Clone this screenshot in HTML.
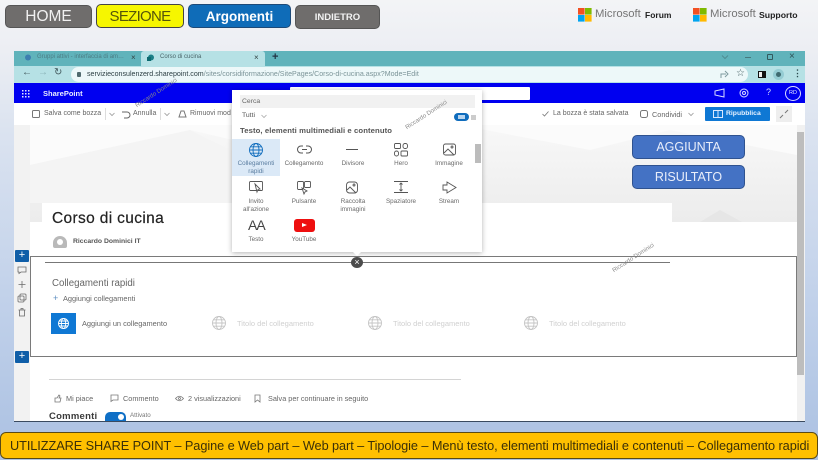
<!DOCTYPE html>
<html lang="it"><head><meta charset="utf-8"><title>Corso di cucina</title>
<style>
*{box-sizing:border-box}
html,body{margin:0;padding:0}
body{width:818px;height:460px;overflow:hidden;position:relative;font-family:"Liberation Sans",sans-serif;background:#e9ecf2}
#w{position:absolute;left:0;top:0;width:818px;height:460px;overflow:hidden;filter:blur(.35px);background:linear-gradient(180deg,#f3f4f6 0,#eceef3 50px,#dbe3f0 130px,#c1d1ea 300px,#aec3e3 440px)}
.a{position:absolute;white-space:nowrap}
.btn{position:absolute;border-radius:5px;display:flex;align-items:center;justify-content:center;border:1px solid #3d3d3d}
.t{color:#666;font-size:7.3px}
.n{color:#d0d0d0;font-size:7.5px}
.lbl{position:absolute;width:48px;text-align:center;font-size:6.3px;line-height:7.5px;color:#6a6a6a}
.wm{font-size:6px;color:#888;transform:rotate(-33deg);transform-origin:0 100%;z-index:5}
svg{position:absolute;overflow:visible}
</style></head><body><div id="w">

<div class="btn" style="left:5px;top:5px;width:87px;height:23px;background:#6f6d6c;color:#f1f1f1;font-size:15.5px;border-color:#555">HOME</div>
<div class="btn" style="left:96px;top:4px;width:88px;height:24px;background:#f6f600;color:#55550a;font-size:15px;letter-spacing:-.7px;border-color:#444">SEZIONE</div>
<div class="btn" style="left:188px;top:4px;width:103px;height:24px;background:#0f6cb8;color:#fff;font-size:13.5px;font-weight:bold;border-color:#1d4a78">Argomenti</div>
<div class="btn" style="left:295px;top:5px;width:85px;height:24px;background:#6f6d6c;color:#f3f3f3;font-size:9.5px;font-weight:bold;border-color:#555">INDIETRO</div>

<!-- Microsoft logos -->
<svg style="left:578px;top:8px" width="14" height="14"><rect width="6.6" height="6.6" fill="#f25022"/><rect x="7" width="6.6" height="6.6" fill="#7fba00"/><rect y="7" width="6.600" height="6.600" fill="#00a4ef"/><rect x="7" y="7" width="6.600" height="6.600" fill="#ffb900"/></svg>
<div class="a" style="left:595px;top:8px;font-size:11.3px;color:#757575">Microsoft</div>
<div class="a" style="left:645px;top:10px;font-size:8.5px;font-weight:bold;color:#222">Forum</div>
<svg style="left:693px;top:8px" width="14" height="14"><rect width="6.600" height="6.600" fill="#f25022"/><rect x="7" width="6.600" height="6.600" fill="#7fba00"/><rect y="7" width="6.600" height="6.600" fill="#00a4ef"/><rect x="7" y="7" width="6.600" height="6.600" fill="#ffb900"/></svg>
<div class="a" style="left:710px;top:8px;font-size:11.3px;color:#757575">Microsoft</div>
<div class="a" style="left:759px;top:10px;font-size:8.7px;font-weight:bold;color:#222">Supporto</div>

<!-- Browser window -->
<div class="a" style="left:14px;top:51px;width:791px;height:370px;background:#fff"></div>
<div class="a" style="left:14px;top:51px;width:791px;height:15px;background:#60b3bb"></div>
<div class="a" style="left:141px;top:51px;width:124px;height:15px;background:#b6e1e5;border-radius:3px 3px 0 0"></div>
<svg style="left:24px;top:54px" width="8" height="8"><circle cx="4" cy="3.500" r="3" fill="#3d7fb0"/></svg>
<div class="a" style="left:37px;top:54px;font-size:6px;color:#4c7c84">Gruppi attivi - interfaccia di am…</div>
<div class="a" style="left:131px;top:53px;font-size:8px;color:#344">×</div>
<svg style="left:147px;top:54px" width="8" height="8"><circle cx="4" cy="3.500" r="3" fill="#1a7f86"/><rect x="0" y="3" width="4" height="4" fill="#0d6a70"/></svg>
<div class="a" style="left:160px;top:54px;font-size:6px;color:#4a6468">Corso di cucina</div>
<div class="a" style="left:254px;top:53px;font-size:8px;color:#344">×</div>
<div class="a" style="left:272px;top:51px;font-size:11px;color:#234;font-weight:bold">+</div>
<svg style="left:721px;top:55px" width="8" height="4" fill="none" stroke="#4f8d93"><path d="M1 .5l3 3 3-3"/></svg>
<div class="a" style="left:745px;top:57px;width:6px;height:1px;background:#47787d"></div>
<div class="a" style="left:767px;top:54px;width:6px;height:6px;border:1px solid #33595e;border-radius:1px"></div>
<div class="a" style="left:789px;top:51px;font-size:10px;color:#2f5257">×</div>

<div class="a" style="left:14px;top:66px;width:791px;height:17px;background:#b6e1e5"></div>
<div class="a" style="left:71px;top:67px;width:677px;height:15px;background:#edf8f9;border-radius:8px"></div>
<div class="a" style="left:22px;top:67px;font-size:10px;color:#41585c">←</div>
<div class="a" style="left:38px;top:67px;font-size:10px;color:#8ab3b8">→</div>
<div class="a" style="left:54px;top:67px;font-size:10px;color:#41585c">↻</div>
<div class="a" style="left:77px;top:72px;width:4px;height:5px;background:#506a6e;border-radius:1px"></div>
<div class="a" style="left:87px;top:70px;font-size:7.1px;color:#7b9498"><span style="color:#2b3e42">servizieconsulenzerd.sharepoint.com</span>/sites/corsidiformazione/SitePages/Corso-di-cucina.aspx?Mode=Edit</div>
<svg style="left:720px;top:70px" width="10" height="9" fill="none" stroke="#7d9a9e"><path d="M1 8V4h5M5 1l3 3-3 3"/></svg>
<div class="a" style="left:736px;top:68px;font-size:10px;color:#405a5e">☆</div>
<div class="a" style="left:758px;top:71px;width:8px;height:7px;border:1px solid #111;border-right-width:4px;background:#eee"></div>
<div class="a" style="left:773px;top:69px;width:11px;height:11px;border-radius:50%;background:#94ccd3"></div>
<div class="a" style="left:776px;top:72px;width:5px;height:5px;border-radius:50%;background:#3e6a70"></div>
<div class="a" style="left:793px;top:68px;font-size:9px;font-weight:bold;color:#2a4a4e">⋮</div>

<!-- SharePoint bar -->
<div class="a" style="left:14px;top:83px;width:791px;height:20px;background:#0000f0"></div>
<svg style="left:22px;top:90px" width="8" height="8" fill="#dfe5ff"><rect width="1.500" height="1.500"/><rect x="3" width="1.500" height="1.500"/><rect x="6" width="1.500" height="1.500"/><rect y="3" width="1.500" height="1.500"/><rect x="3" y="3" width="1.500" height="1.500"/><rect x="6" y="3" width="1.500" height="1.500"/><rect y="6" width="1.500" height="1.500"/><rect x="3" y="6" width="1.500" height="1.500"/><rect x="6" y="6" width="1.500" height="1.500"/></svg>
<div class="a" style="left:43px;top:89px;font-size:7.500px;font-weight:bold;color:#e8ecff">SharePoint</div>
<div class="a" style="left:290px;top:87px;width:240px;height:13px;background:#fff;border-radius:1px"></div>
<svg style="left:714px;top:88px" width="12" height="10" fill="none" stroke="#d8ddff"><path d="M1 3l9-2v8L1 7z"/></svg>
<svg style="left:739px;top:88px" width="10" height="10" fill="none" stroke="#d8ddff"><circle cx="5" cy="5" r="4"/><circle cx="5" cy="5" r="1.500"/></svg>
<div class="a" style="left:766px;top:87px;font-size:9px;color:#d8ddff">?</div>
<div class="a" style="left:785px;top:86px;width:16px;height:15px;border:1px solid #d8ddff;border-radius:50%;color:#e5e8ff;font-size:5.500px;text-align:center;line-height:13px">RD</div>

<!-- Command bar -->
<div class="a" style="left:14px;top:103px;width:791px;height:22px;background:#fff"></div>
<svg style="left:32px;top:110px" width="8" height="8" fill="none" stroke="#777"><rect x=".5" y=".5" width="7" height="7" rx="1"/></svg>
<div class="a t" style="left:44px;top:110px;font-size:7px">Salva come bozza</div>
<div class="a" style="left:105px;top:108px;width:1px;height:12px;background:#ddd"></div>
<svg style="left:109px;top:113px" width="6" height="3" fill="none" stroke="#999" stroke-width=".8"><path d="M.5 0l2.500 2.500L5.500 0"/></svg>
<svg style="left:121px;top:110px" width="9" height="9" fill="none" stroke="#666"><path d="M1 2h5a2.500 2.500 0 0 1 0 6H3"/></svg>
<div class="a t" style="left:133px;top:110px;font-size:7px">Annulla</div>
<div class="a" style="left:160px;top:108px;width:1px;height:12px;background:#ddd"></div>
<svg style="left:164px;top:113px" width="6" height="3" fill="none" stroke="#999" stroke-width=".8"><path d="M.5 0l2.500 2.500L5.500 0"/></svg>
<svg style="left:178px;top:110px" width="9" height="8" fill="none" stroke="#777"><path d="M1 7h7L6 1H3z"/></svg>
<div class="a t" style="left:190px;top:110px;font-size:7px">Rimuovi mod</div>
<svg style="left:542px;top:111px" width="7" height="6" fill="none" stroke="#777" stroke-width=".8"><path d="M.5 3l2 2 4-4.500"/></svg>
<div class="a t" style="left:553px;top:110px;font-size:7px">La bozza è stata salvata</div>
<svg style="left:640px;top:110px" width="8" height="8" fill="none" stroke="#777"><rect x=".5" y=".5" width="7" height="7" rx="2"/></svg>
<div class="a t" style="left:652px;top:110px">Condividi</div>
<svg style="left:688px;top:113px" width="6" height="3" fill="none" stroke="#999" stroke-width=".8"><path d="M.5 0l2.500 2.500L5.500 0"/></svg>
<div class="a" style="left:705px;top:107px;width:65px;height:14px;background:#0f78d4;border-radius:1px;color:#e8f2ff;font-size:6.800px;font-weight:bold;line-height:14px;padding-left:21px">Ripubblica</div>
<svg style="left:713px;top:110px" width="10" height="8" fill="none" stroke="#dbe9ff"><rect x=".5" y=".5" width="9" height="7"/><path d="M5 .5v7"/></svg>
<div class="a" style="left:776px;top:106px;width:16px;height:16px;background:#eee"></div>
<svg style="left:779px;top:109px" width="10" height="10" fill="none" stroke="#777"><path d="M1 9l3-3M9 1L6 4"/></svg>

<!-- Content -->
<div class="a" style="left:14px;top:125px;width:16px;height:296px;background:#f2f2f2"></div>
<div class="a" style="left:30px;top:125px;width:767px;height:97px;background:linear-gradient(180deg,#f8f8f8 0,#f2f2f2 50%,#ececec 100%)"></div>
<svg style="left:30px;top:125px" width="767" height="97"><path d="M0 0H767V30L640 5 560 25 430 0 290 35 160 5 0 40z" fill="#fbfbfb"/><path d="M0 40L160 5 210 30V78H0z" fill="#f4f4f4"/><path d="M670 97l20-12 22 12z" fill="#e6e6e6"/></svg>
<div class="a" style="left:797px;top:125px;width:8px;height:296px;background:#f1f1f1"></div>
<div class="a" style="left:797px;top:132px;width:7px;height:243px;background:#bdbdbd"></div>
<div class="a" style="left:42px;top:203px;width:630px;height:52px;background:#fff"></div>
<div class="a" style="left:30px;top:222px;width:12px;height:33px;background:#fff"></div>
<div class="a" style="left:672px;top:222px;width:125px;height:33px;background:#fff"></div>
<div class="a" style="left:52px;top:210px;font-size:15.500px;color:#222;letter-spacing:.35px;-webkit-text-stroke:.2px #222">Corso di cucina</div>
<div class="a" style="left:53px;top:236px;width:14px;height:12px;background:#b9b9b9;border-radius:7px 7px 2px 2px"></div>
<div class="a" style="left:57px;top:239px;width:6px;height:6px;background:#fff;border-radius:50%"></div>
<div class="a" style="left:73px;top:238px;font-size:6.800px;font-weight:bold;color:#555">Riccardo Dominici IT</div>

<!-- Section frame -->
<div class="a" style="left:30px;top:256px;width:767px;height:101px;border:1px solid #7a7a7a;background:#fff"></div>
<div class="a" style="left:45px;top:262px;width:625px;height:1px;background:#777"></div>
<div class="a" style="left:351px;top:257px;width:12px;height:11px;border-radius:50%;background:#4c4c4c;color:#fff;font-size:9px;line-height:10px;text-align:center">×</div>
<div class="a" style="left:15px;top:250px;width:14px;height:12px;background:#0f5ea8;color:#fff;font-size:11px;line-height:11px;text-align:center;border-radius:1px">+</div>
<svg style="left:17px;top:265px" width="11" height="52" fill="none" stroke="#6a6a6a" stroke-width=".8"><path d="M1 2h8v5H4L2 8.500V7H1z"/><path d="M5 16v7M1.500 19.500h7"/><rect x="3" y="29" width="6" height="6" rx="1"/><rect x="1" y="31" width="6" height="6" rx="1"/><path d="M1.500 45h7M2.500 45v6h5v-6M4 45v-1.500h2V45"/></svg>
<div class="a" style="left:15px;top:351px;width:14px;height:12px;background:#0f5ea8;color:#fff;font-size:11px;line-height:11px;text-align:center;border-radius:1px">+</div>

<div class="a" style="left:52px;top:278px;font-size:9.700px;color:#666">Collegamenti rapidi</div>
<div class="a" style="left:53px;top:293px;font-size:9px;color:#5d8ec0">+</div>
<div class="a t" style="left:63px;top:294px;font-size:7.400px">Aggiungi collegamenti</div>
<div class="a" style="left:51px;top:313px;width:25px;height:21px;background:#0f78d4"></div>
<svg style="left:58px;top:318px" width="11" height="11" fill="none" stroke="#fff" stroke-width=".9"><circle cx="5.500" cy="5.500" r="5"/><ellipse cx="5.500" cy="5.500" rx="2.200" ry="5"/><path d="M.5 5.500h10M1.200 3h8.600M1.200 8h8.600"/></svg>
<div class="a t" style="left:82px;top:319px;font-size:7.400px">Aggiungi un collegamento</div>

<svg style="left:212px;top:316px" width="14" height="14" fill="none" stroke="#c4c4c4" stroke-width=".9"><circle cx="7" cy="7" r="6.500"/><ellipse cx="7" cy="7" rx="3" ry="6.500"/><path d="M.5 7h13M1.500 3.800h11M1.500 10.200h11"/></svg>
<div class="a n" style="left:237px;top:319px">Titolo del collegamento</div>
<svg style="left:368px;top:316px" width="14" height="14" fill="none" stroke="#c4c4c4" stroke-width=".9"><circle cx="7" cy="7" r="6.500"/><ellipse cx="7" cy="7" rx="3" ry="6.500"/><path d="M.5 7h13M1.500 3.800h11M1.500 10.200h11"/></svg>
<div class="a n" style="left:393px;top:319px">Titolo del collegamento</div>
<svg style="left:524px;top:316px" width="14" height="14" fill="none" stroke="#c4c4c4" stroke-width=".9"><circle cx="7" cy="7" r="6.500"/><ellipse cx="7" cy="7" rx="3" ry="6.500"/><path d="M.5 7h13M1.500 3.800h11M1.500 10.200h11"/></svg>
<div class="a n" style="left:549px;top:319px">Titolo del collegamento</div>

<!-- Footer of page -->
<div class="a" style="left:49px;top:379px;width:412px;height:1px;background:#d4d4d4"></div>
<svg style="left:54px;top:394px" width="8" height="9" fill="none" stroke="#777" stroke-width=".8"><path d="M1 4h2l2-3 1 1-1 2h2l-1 4H1z"/></svg>
<div class="a t" style="left:66px;top:394px">Mi piace</div>
<svg style="left:110px;top:394px" width="9" height="8" fill="none" stroke="#777" stroke-width=".8"><path d="M1 1h7v5H3L1 7.500z"/></svg>
<div class="a t" style="left:123px;top:394px">Commento</div>
<svg style="left:175px;top:395px" width="9" height="7" fill="none" stroke="#777" stroke-width=".8"><path d="M.5 3.500Q4.500-1 8.500 3.500 4.500 8 .5 3.500z"/><circle cx="4.500" cy="3.500" r="1"/></svg>
<div class="a t" style="left:188px;top:394px">2 visualizzazioni</div>
<svg style="left:254px;top:394px" width="7" height="9" fill="none" stroke="#777" stroke-width=".8"><path d="M1 1h5v7L3.500 6 1 8z"/></svg>
<div class="a t" style="left:268px;top:394px">Salva per continuare in seguito</div>
<div class="a" style="left:49px;top:411px;font-size:9.500px;font-weight:bold;color:#3a3a3a;letter-spacing:.25px">Commenti</div>
<div class="a" style="left:105px;top:412px;width:21px;height:9px;background:#0f6fc6;border-radius:5px 5px 0 0"></div>
<div class="a" style="left:118px;top:414px;width:6px;height:6px;background:#fff;border-radius:50%"></div>
<div class="a" style="left:130px;top:412px;font-size:6.200px;color:#777">Attivato</div>
<div class="a" style="left:14px;top:421px;width:791px;height:1px;background:#3a4a60"></div>

<!-- Watermarks -->
<div class="a wm" style="left:138px;top:103px">Riccardo Dominici</div>
<div class="a wm" style="left:615px;top:268px">Riccardo Dominici</div>

<!-- Panel -->
<div class="a" style="left:232px;top:90px;width:250px;height:162px;background:#fff;box-shadow:0 1px 5px rgba(0,0,0,.3)"></div>
<div class="a" style="left:353px;top:252px;width:0;height:0;border:4px solid transparent;border-top-color:#fff"></div>
<div class="a" style="left:240px;top:95px;width:235px;height:13px;background:#f1f1f1;font-size:6.800px;color:#666;line-height:13px;padding-left:2px">Cerca</div>
<div class="a" style="left:242px;top:112px;font-size:6.800px;color:#555">Tutti</div>
<svg style="left:261px;top:115px" width="6" height="3" fill="none" stroke="#aaa" stroke-width=".8"><path d="M.5 0l2.500 2.500L5.500 0"/></svg>
<div class="a" style="left:454px;top:113px;width:15px;height:8px;background:#0f6cbd;border-radius:4px"></div>
<div class="a" style="left:458px;top:115px;width:7px;height:4px;background:#b7d4ef"></div>
<div class="a" style="left:471px;top:115px;width:5px;height:5px;background:#ccc"></div>
<div class="a" style="left:240px;top:126px;font-size:7.700px;font-weight:bold;color:#555;letter-spacing:.1px">Testo, elementi multimediali e contenuto</div>
<div class="a wm" style="left:408px;top:125px">Riccardo Dominici</div>
<div class="a" style="left:232px;top:139px;width:48px;height:37px;background:#dbe9f7"></div>
<div class="a" style="left:475px;top:144px;width:6px;height:19px;background:#bcbcbc"></div>

<svg style="left:249px;top:143px" width="14" height="14" fill="none" stroke="#0f6cbd" stroke-width=".9"><circle cx="7" cy="7" r="6.500"/><ellipse cx="7" cy="7" rx="3" ry="6.500"/><path d="M.5 7h13M1.500 3.800h11M1.500 10.200h11"/></svg>
<svg style="left:297px;top:145px" width="15" height="9" fill="none" stroke="#555"><path d="M6 1H4a3.500 3.500 0 0 0 0 7h2M9 1h2a3.500 3.500 0 0 1 0 7H9M5 4.500h5"/></svg>
<svg style="left:346px;top:149px" width="12" height="2"><rect width="12" height="1" fill="#555"/></svg>
<svg style="left:394px;top:143px" width="14" height="14" fill="none" stroke="#555" stroke-width=".9"><rect x=".5" y=".5" width="6" height="5" rx="1"/><rect x="9" y=".5" width="4.500" height="5" rx="2"/><rect x=".5" y="8" width="4" height="5" rx="2"/><rect x="7" y="8" width="6.500" height="5" rx="1"/></svg>
<svg style="left:443px;top:143px" width="13" height="13" fill="none" stroke="#555" stroke-width=".9"><rect x=".5" y="1" width="12" height="11" rx="2"/><circle cx="9" cy="4" r="1"/><path d="M1 10l4-4 6 6"/></svg>
<div class="lbl" style="left:232px;top:160px;color:#5a7da0">Collegamenti<br>rapidi</div>
<div class="lbl" style="left:280px;top:160px">Collegamento</div>
<div class="lbl" style="left:329px;top:160px">Divisore</div>
<div class="lbl" style="left:377px;top:160px">Hero</div>
<div class="lbl" style="left:425px;top:160px">Immagine</div>

<svg style="left:249px;top:181px" width="15" height="13" fill="none" stroke="#555" stroke-width=".9"><rect x=".5" y=".5" width="13" height="9" rx="1"/><path d="M6 3l5 5-2 .5-1 2.500z" fill="#fff"/></svg>
<svg style="left:297px;top:181px" width="15" height="13" fill="none" stroke="#555" stroke-width=".9"><rect x=".5" y=".5" width="6" height="8" rx="1"/><rect x="7.500" y=".5" width="6" height="6" rx="1"/><path d="M5 7l5 3-2 1-1 2z" fill="#fff"/></svg>
<svg style="left:346px;top:181px" width="13" height="13" fill="none" stroke="#555" stroke-width=".9"><rect x=".5" y="1" width="11" height="11" rx="3"/><circle cx="8" cy="4" r="1"/><path d="M1 9l3-3 6 6"/></svg>
<svg style="left:394px;top:181px" width="14" height="12" fill="none" stroke="#555" stroke-width=".9"><path d="M0 .5h14M0 11.500h14M7 2v8M5.500 3.500L7 2l1.500 1.500M5.500 8.500L7 10l1.500-1.500"/></svg>
<svg style="left:442px;top:181px" width="15" height="13" fill="none" stroke="#555" stroke-width=".9"><path d="M5 1l9 5.500L5 12V9H1V4h4z"/></svg>
<div class="lbl" style="left:232px;top:198px">Invito<br>all'azione</div>
<div class="lbl" style="left:280px;top:198px">Pulsante</div>
<div class="lbl" style="left:329px;top:198px">Raccolta<br>immagini</div>
<div class="lbl" style="left:377px;top:198px">Spaziatore</div>
<div class="lbl" style="left:425px;top:198px">Stream</div>

<div class="a" style="left:248px;top:217px;font-size:14px;color:#444;letter-spacing:-1px">AA</div>
<div class="a" style="left:294px;top:219px;width:21px;height:13px;background:#ee0f0f;border-radius:3px"></div>
<div class="a" style="left:302px;top:223px;width:0;height:0;border-left:5px solid #fff;border-top:2.500px solid transparent;border-bottom:2.500px solid transparent"></div>
<div class="lbl" style="left:232px;top:236px">Testo</div>
<div class="lbl" style="left:280px;top:236px">YouTube</div>

<!-- Blue callouts -->
<div class="btn" style="left:632px;top:135px;width:113px;height:24px;background:#4472c4;color:#e9eefa;font-size:12.500px;border-color:#2f528f">AGGIUNTA</div>
<div class="btn" style="left:632px;top:165px;width:113px;height:24px;background:#4472c4;color:#e9eefa;font-size:12.500px;border-color:#2f528f">RISULTATO</div>

<!-- Bottom banner -->
<div class="a" style="left:0;top:432px;width:818px;height:27px;background:#ffc000;border:1px solid #5a4a14;border-radius:6px;color:#3b3008;font-size:12.750px;line-height:25px;padding-left:9px;letter-spacing:-.08px">UTILIZZARE SHARE POINT – Pagine e Web part – Web part – Tipologie – Menù testo, elementi multimediali e contenuti – Collegamento rapidi</div>
</div></body></html>
